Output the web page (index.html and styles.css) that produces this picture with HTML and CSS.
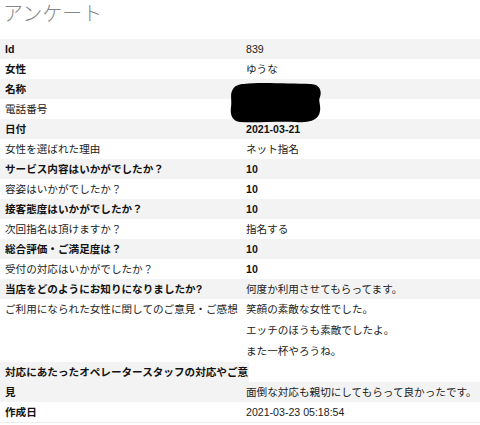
FILE: index.html
```html
<!DOCTYPE html>
<html lang="ja">
<head>
<meta charset="utf-8">
<link rel="stylesheet" href="styles.css">
</head>
<body>
<h1 class="title">アンケート</h1>
<div class="table">
  <div class="row odd"><div class="k b">Id</div><div class="v">839</div></div>
  <div class="row"><div class="k b">女性</div><div class="v">ゆうな</div></div>
  <div class="row odd"><div class="k b">名称</div><div class="v"></div></div>
  <div class="row"><div class="k">電話番号</div><div class="v"></div></div>
  <div class="row odd"><div class="k b">日付</div><div class="v b">2021-03-21</div></div>
  <div class="row"><div class="k">女性を選ばれた理由</div><div class="v">ネット指名</div></div>
  <div class="row odd"><div class="k b">サービス内容はいかがでしたか？</div><div class="v b">10</div></div>
  <div class="row"><div class="k">容姿はいかがでしたか？</div><div class="v b">10</div></div>
  <div class="row odd"><div class="k b">接客態度はいかがでしたか？</div><div class="v b">10</div></div>
  <div class="row"><div class="k">次回指名は頂けますか？</div><div class="v">指名する</div></div>
  <div class="row odd"><div class="k b">総合評価・ご満足度は？</div><div class="v b">10</div></div>
  <div class="row"><div class="k">受付の対応はいかがでしたか？</div><div class="v b">10</div></div>
  <div class="row odd"><div class="k b">当店をどのようにお知りになりましたか?</div><div class="v">何度か利用させてもらってます。</div></div>
  <div class="row multi"><div class="k">ご利用になられた女性に関してのご意見・ご感想</div><div class="v">笑顔の素敵な女性でした。<br>エッチのほうも素敵でしたよ。<br>また一杯やろうね。</div></div>
  <div class="wrap-label b">対応にあたったオペレータースタッフの対応やご意</div>
  <div class="row odd"><div class="k b">見</div><div class="v">面倒な対応も親切にしてもらって良かったです。</div></div>
  <div class="row last"><div class="k b">作成日</div><div class="v">2021-03-23 05:18:54</div></div>
  <svg class="redact" width="92" height="40" viewBox="0 0 92 40">
    <path d="M14 1 C30 -1 62 1 80 1 C90 1 92 8 90 14 C88 18 91 22 90 28 C89 37 80 40 66 39 C48 38 26 40 10 39 C2 38 0 32 1 24 C2 18 0 12 2 8 C4 3 8 1 14 1 Z" fill="#000"/>
  </svg>
</div>
</body>
</html>
```
FILE: styles.css
```css
html, body {
  margin: 0;
  padding: 0;
  background: #fff;
}
body {
  font-family: "Liberation Sans", "Noto Sans CJK JP", sans-serif;
  font-size: 10.6px;
  color: #222;
}
.title {
  margin: 0;
  padding: 1px 0 0 3px;
  height: 39px;
  box-sizing: border-box;
  font-size: 20px;
  font-weight: 300;
  color: #858585;
  line-height: 26px;
}
.table {
  position: relative;
  border-bottom: 1px solid #eeeeee;
}
.row {
  display: grid;
  grid-template-columns: 241px 1fr;
  line-height: 20px;
}
.row.odd {
  background: #f3f3f3;
}
.k {
  padding-left: 5px;
  white-space: nowrap;
}
.v {
  padding-left: 5px;
  white-space: nowrap;
}
.b {
  font-weight: 600;
  color: #111;
}
.row.multi {
  line-height: 21px;
}
.wrap-label {
  width: 249px;
  box-sizing: border-box;
  padding-left: 5px;
  background: #f3f3f3;
  line-height: 20px;
  white-space: nowrap;
}
.redact {
  position: absolute;
  left: 230px;
  top: 44px;
}
```
